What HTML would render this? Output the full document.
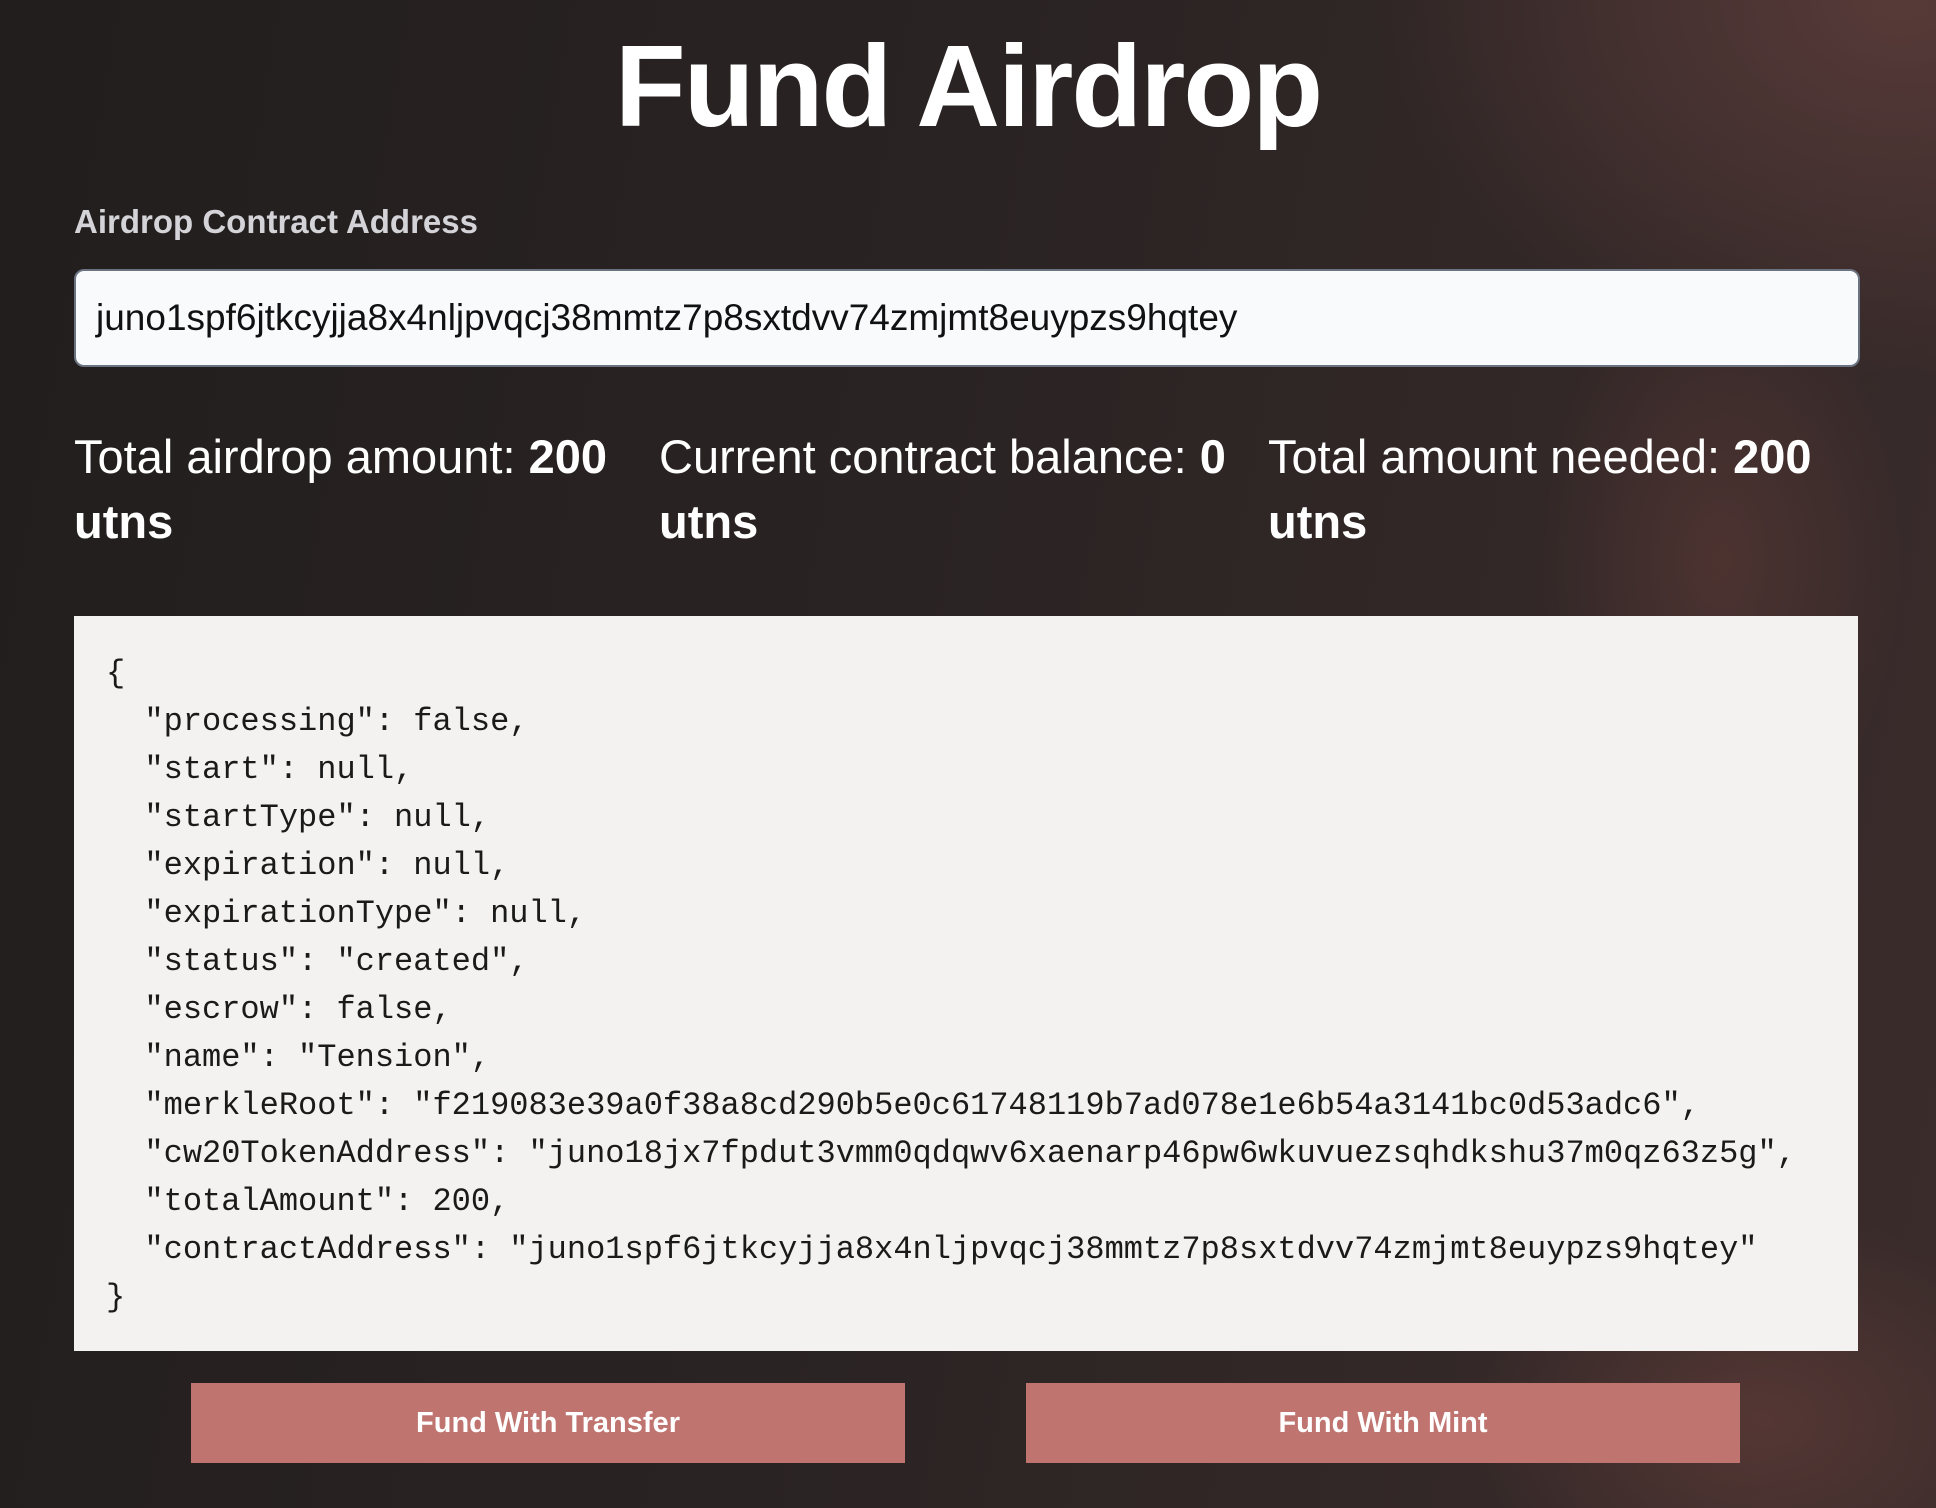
<!DOCTYPE html>
<html><head><meta charset="utf-8"><style>
html,body{margin:0;padding:0}
body{width:1936px;height:1508px;overflow:hidden;position:relative;font-family:"Liberation Sans",sans-serif;color:#fff;
background:
radial-gradient(ellipse 260px 420px at 1720px 560px, rgba(120,70,65,0.35), rgba(0,0,0,0) 70%),
radial-gradient(ellipse 420px 300px at 1760px 1420px, rgba(120,70,65,0.45), rgba(0,0,0,0) 70%),
radial-gradient(ellipse 700px 500px at 1900px 0px, rgba(90,60,58,0.9), rgba(0,0,0,0) 75%),
linear-gradient(100deg,#221e1e 0%,#2a2323 45%,#3a2c2b 100%);}
.abs{position:absolute}
h1{position:absolute;left:0;width:1936px;top:16px;margin:0;text-align:center;font-size:116px;letter-spacing:-2px;font-weight:bold;line-height:140px}
.label{left:74px;top:203px;font-size:33px;font-weight:bold;color:#d4d4d8}
.input{left:74px;top:269px;height:94px;background:#f8fafc;border:2px solid #6b7280;border-radius:10px;color:#111;font-size:37px;line-height:94px;padding-left:20px;box-sizing:content-box;width:1762px}
.stat{top:424px;font-size:47px;line-height:65px;width:590px}
.stat b{font-weight:bold}
pre{position:absolute;left:74px;top:616px;width:1784px;height:735px;margin:0;background:#f3f2f0;color:#1a1a1a;font-family:"Liberation Mono",monospace;font-size:32px;line-height:48px;padding:34px 0 0 32px;box-sizing:border-box}
.btn{top:1383px;width:714px;height:80px;background:#c07470;color:#fff;font-weight:bold;font-size:29px;text-align:center;line-height:80px}
</style></head><body>
<h1>Fund Airdrop</h1>
<div class="abs label">Airdrop Contract Address</div>
<div class="abs input">juno1spf6jtkcyjja8x4nljpvqcj38mmtz7p8sxtdvv74zmjmt8euypzs9hqtey</div>
<div class="abs stat" style="left:74px">Total airdrop amount: <b>200 utns</b></div>
<div class="abs stat" style="left:659px">Current contract balance: <b>0 utns</b></div>
<div class="abs stat" style="left:1268px">Total amount needed: <b>200 utns</b></div>
<pre>{
  "processing": false,
  "start": null,
  "startType": null,
  "expiration": null,
  "expirationType": null,
  "status": "created",
  "escrow": false,
  "name": "Tension",
  "merkleRoot": "f219083e39a0f38a8cd290b5e0c61748119b7ad078e1e6b54a3141bc0d53adc6",
  "cw20TokenAddress": "juno18jx7fpdut3vmm0qdqwv6xaenarp46pw6wkuvuezsqhdkshu37m0qz63z5g",
  "totalAmount": 200,
  "contractAddress": "juno1spf6jtkcyjja8x4nljpvqcj38mmtz7p8sxtdvv74zmjmt8euypzs9hqtey"
}</pre>
<div class="abs btn" style="left:191px">Fund With Transfer</div>
<div class="abs btn" style="left:1026px">Fund With Mint</div>
</body></html>
